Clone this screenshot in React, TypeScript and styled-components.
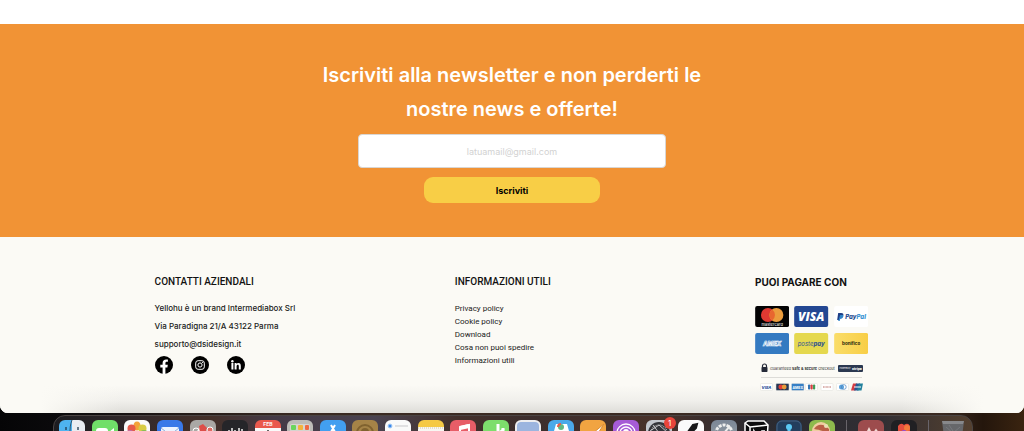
import React from "react";
import styled, { createGlobalStyle } from "styled-components";

const Global = createGlobalStyle`
  * { box-sizing: border-box; }
  body { margin: 0; background: #0b0a0c; font-family: Inter, "Liberation Sans", sans-serif; }
  h2, h3, p, ul { margin: 0; padding: 0; }
`;

const Desktop = styled.div`
  min-height: 100vh;
  display: flex;
  flex-direction: column;
  overflow: hidden;
  background: linear-gradient(90deg, #050506 0%, #0b0a0c 6%, #3a2a22 30%, #3a2a22 92%, #24160c 96%, #3a2410 100%);
`;

const Page = styled.div`
  flex: 1;
  display: flex;
  flex-direction: column;
  overflow: hidden;
  border-radius: 0 0 8px 8px;
  background: #fff;
  padding-top: 24px;
`;

const Newsletter = styled.section`
  background: #f19335;
  padding: 34px 16px;
  display: flex;
  flex-direction: column;
  align-items: center;
`;

const Title = styled.h2`
  max-width: 400px;
  color: #fff;
  font-size: 20px;
  line-height: 34px;
  font-weight: 600;
  text-align: center;
`;

const Form = styled.form`
  width: 31%;
  min-width: 240px;
  margin-top: 8px;
  display: flex;
  flex-direction: column;
  align-items: center;
  gap: 9px;
`;

const Email = styled.input`
  width: 100%;
  height: 34px;
  border: 1px solid #d9d6d3;
  border-radius: 4px;
  background: #fff;
  text-align: center;
  font: 400 9px Inter, sans-serif;
  &::placeholder { color: #d2d2d2; opacity: 1; }
`;

const Submit = styled.button`
  width: 57%;
  height: 26px;
  border: 0;
  border-radius: 9px;
  background: #f8ce46;
  color: #000;
  font: 700 9px Inter, sans-serif;
`;

const Footer = styled.footer`
  flex: 1;
  display: grid;
  grid-template-columns: 42% 42% 1fr;
  padding: 37px 15.1% 16px;
  background:
    linear-gradient(90deg, #fbfaf5 4%, rgba(251, 250, 245, 0) 12%, rgba(251, 250, 245, 0) 88%, #fbfaf5 96%),
    linear-gradient(0deg, #deddd8 0, #f0efeb 12px, #fbfaf5 28px);
`;

const Heading = styled.h3<{ $bold?: boolean }>`
  color: #111;
  font-family: ${(p) => (p.$bold ? "Inter" : "Roboto")}, sans-serif;
  font-size: 10px;
  line-height: 16px;
  font-weight: ${(p) => (p.$bold ? 700 : 500)};
  margin-bottom: ${(p) => (p.$bold ? 16 : 9)}px;
  white-space: nowrap;
`;

const Contact = styled.p`
  color: #1a1a1a;
  font-size: 8px;
  line-height: 18px;
  font-weight: 500;
  white-space: nowrap;
`;

const Socials = styled.div`
  display: flex;
  gap: 18px;
  margin-top: 3px;
`;

const SocialLink = styled.a`
  display: block;
  height: 18px;
  svg { display: block; width: 18px; height: 18px; }
`;

const Links = styled.ul`
  list-style: none;
  padding-top: 3px;
`;

const LinkItem = styled.li`
  height: 13px;
  line-height: 13px;
  font-family: Roboto, sans-serif;
  font-size: 8px;
  a { display: block; color: #222; text-decoration: none; white-space: nowrap; }
`;

const Cards = styled.div`
  width: 113px;
  display: grid;
  grid-template-columns: repeat(3, 1fr);
  gap: 6px 5px;
  svg { display: block; width: 100%; height: 21px; }
`;

const Trust = styled.svg`
  display: block;
  width: 113px;
  height: 32px;
  margin-top: 8px;
`;

const DockStrip = styled.div`
  height: 18px;
  flex: none;
  overflow: hidden;
  padding: 2px 5% 0 5.2%;
`;

const Dock = styled.div`
  height: 40px;
  display: flex;
  align-items: flex-start;
  padding: 4px 6px 0 5px;
  border: 1px solid #4a4443;
  border-radius: 12px;
  background: linear-gradient(90deg, #1c1c20 0%, #33292a 9%, #443029 17%, #443a46 24%, #4a4350 35%, #43302b 44%, #3c2e2d 52%, #49322a 66%, #2b2a30 76%, #302e33 90%, #54402f 100%);
`;

const Apps = styled.div`
  flex: 1;
  display: flex;
  justify-content: space-between;
`;

const Tile = styled.div<{ $bg: string }>`
  position: relative;
  width: 26px;
  height: 26px;
  flex: none;
  border-radius: 6px;
  background: ${(p) => p.$bg};
  svg { display: block; width: 26px; height: 26px; }
`;

const Badge = styled.span`
  position: absolute;
  top: -3px;
  right: -4px;
  width: 12px;
  height: 12px;
  border-radius: 50%;
  background: #e8453a;
  color: #fff;
  font-size: 8px;
  line-height: 12px;
  text-align: center;
`;

const Separator = styled.div`
  width: 1px;
  height: 26px;
  margin: 0 11px;
  background: #68646a;
`;

const Extra = styled.div`
  display: flex;
  gap: 7px;
`;

type App = { bg: string; art: React.ReactNode; badge?: string };

const apps: App[] = [
  { bg: "linear-gradient(90deg,#4eb3f0 50%,#e9edf2 50%)", art: <><path d="M13 0c-2 5-2 9-2 13h4" fill="none" stroke="#31566f" strokeWidth="1" /><path d="M7 7v3M19 7v3" stroke="#203a50" strokeWidth="1.3" /></> },
  { bg: "#70df69", art: <><rect x="4" y="8" width="12" height="11" rx="3" fill="#fff" /><path d="M17 12l5-4v10l-5-4z" fill="#fff" /></> },
  { bg: "#fafafa", art: <><ellipse cx="13" cy="6" rx="3.5" ry="4.5" fill="#f3a33a" /><circle cx="7.5" cy="8.5" r="4" fill="#e65a4b" /><circle cx="18.5" cy="8.5" r="4" fill="#d8cc45" /><circle cx="6" cy="14" r="4" fill="#bf6fa8" /><circle cx="20" cy="14" r="4" fill="#82bc59" /></> },
  { bg: "#3978e8", art: <><rect x="4" y="7" width="18" height="13" rx="2" fill="#edf3ff" /><path d="M4 8l9 7 9-7" fill="none" stroke="#8eadd5" /></> },
  { bg: "#aaa8a5", art: <><path d="M3 18l7-12 3 1 7 12" fill="#f4f1ef" /><path d="M10 14l-1-8 4-2 4 4-2 7z" fill="#dd4e49" /><circle cx="6" cy="11" r="3" fill="none" stroke="#fff" /><circle cx="20" cy="10" r="3" fill="#df6b62" stroke="#fff" /></> },
  { bg: "#252529", art: <path d="M7 13V10M10 14V8M13 14V10M17 14V8M20 14V9" stroke="#f1f1f1" strokeWidth="1.5" /> },
  { bg: "linear-gradient(#ea594d 8px,#fafafa 8px)", art: <><text x="13" y="6" textAnchor="middle" fontSize="5" fontWeight="700" fill="#fff">FEB</text><path d="M13 10v8" stroke="#333" strokeWidth="1.5" /></> },
  { bg: "#bdbcb8", art: <><rect x="3" y="4" width="20" height="18" rx="2" fill="#d6d4cf" /><rect x="4" y="5" width="5" height="5" rx="1" fill="#69d65d" /><rect x="11" y="5" width="5" height="5" rx="1" fill="#f3b43e" /><rect x="18" y="5" width="4" height="5" rx="1" fill="#ee6a45" /></> },
  { bg: "#429ff0", art: <path d="M11 5l8 14M15 5L7 19M4 15h18" fill="none" stroke="#fff" strokeWidth="2" /> },
  { bg: "#a58347", art: <><circle cx="13" cy="13" r="8" fill="none" stroke="#80622f" strokeWidth="2" /><circle cx="13" cy="12" r="4" fill="#80622f" /></> },
  { bg: "#fafafa", art: <><circle cx="5" cy="6" r="2" fill="#3887ea" stroke="#aacdf5" /><path d="M10 6h13M10 13h13" stroke="#c7c7ca" /></> },
  { bg: "linear-gradient(#f5c944 7px,#f8f7f3 7px)", art: <path d="M0 8h26" stroke="#d2c9a8" strokeDasharray="1 1" /> },
  { bg: "#e75d67", art: <><path d="M10 18V7l9-2v11" fill="none" stroke="#fff" strokeWidth="2" /><path d="M10 8l9-2" stroke="#fff" strokeWidth="4" /></> },
  { bg: "#7dde6c", art: <><path d="M15 4v15M20 8v7" stroke="#fff" strokeWidth="3" /><path d="M15 13l6-4" stroke="#fff" strokeWidth="2" /></> },
  { bg: "#eeeef0", art: <rect x="2" y="2" width="22" height="22" rx="4" fill="#9cb5df" /> },
  { bg: "#4ba9e9", art: <><path d="M6 11l2-7h11l2 7v9H6z" fill="#fff" /><circle cx="13" cy="7" r="3" fill="#63b982" /><path d="M10 7a3 3 0 0 1 3-3" fill="none" stroke="#e85d4a" strokeWidth="2" /></> },
  { bg: "#f1a441", art: <path d="M7 18L24 4l-9 14z" fill="#fff" stroke="#da8c34" /> },
  { bg: "#a65bd6", art: <><g fill="none" stroke="#fff" strokeWidth="1.3"><circle cx="13" cy="13" r="9" /><circle cx="13" cy="13" r="6" /></g><circle cx="13" cy="12" r="3" fill="#fff" /></> },
  { bg: "#c3c7ce", badge: "1", art: <><circle cx="13" cy="13" r="11" fill="#33343a" /><circle cx="13" cy="13" r="8" fill="none" stroke="#aaa" strokeWidth="1.5" strokeDasharray="1 1" /><path d="M4 11l9-6 9 8M7 5l6 8" fill="none" stroke="#c4c4c8" strokeWidth="1" /></> },
  { bg: "#fafafa", art: <path d="M7 16L15 5l4-1-1 4-10 10z" fill="#171719" stroke="#171719" strokeWidth="2" /> },
  { bg: "linear-gradient(#7b8696,#9ba4a8)", art: <><circle cx="13" cy="13" r="8" fill="none" stroke="#eee" strokeWidth="3" strokeDasharray="3 1" /><path d="M13 13l6-7" stroke="#eee" strokeWidth="2" /></> },
  { bg: "transparent", art: <><path d="M2 3l3-2h16l4 4-1 15-17 1-5-5z" fill="#0b0b0d" stroke="#fff" strokeWidth="1.5" /><path d="M2 3l5 4 18-2M7 7v15" fill="none" stroke="#fff" strokeWidth="1.5" /><path d="M11 17v-6l4 6v-6M19 16v-5h3" fill="none" stroke="#fff" strokeWidth="1.6" /></> },
  { bg: "#233e5d", art: <><rect x="1" y="1" width="24" height="24" rx="5" fill="none" stroke="#466180" /><circle cx="13" cy="7" r="3" fill="#5bc9f4" /><path d="M13 8v8" stroke="#5bc9f4" strokeWidth="3" /></> },
  { bg: "#8dba4c", art: <><circle cx="12" cy="11" r="9" fill="#efcda0" /><path d="M5 9c4-6 10-5 15 0v5c-5-3-9-4-15-5" fill="#b95f45" /><circle cx="17" cy="6" r="2" fill="#e9dfb3" /></> },
];

function AppTile({ app }: { app: App }) {
  return (
    <Tile $bg={app.bg}>
      <svg viewBox="0 0 26 26" aria-hidden="true">{app.art}</svg>
      {app.badge && <Badge>{app.badge}</Badge>}
    </Tile>
  );
}

const links = ["Privacy policy", "Cookie policy", "Download", "Cosa non puoi spedire", "Informazioni utili"];

function PaymentCards() {
  const box = { viewBox: "0 0 34 21", role: "img" };
  return (
    <Cards>
      <svg {...box} aria-label="Mastercard">
        <rect width="34" height="21" rx="2" fill="#030304" />
        <circle cx="12.8" cy="9" r="7" fill="#df3932" />
        <circle cx="21.2" cy="9" r="7" fill="#eb9c3c" />
        <path d="M17 3.4a7 7 0 0 1 0 11.2a7 7 0 0 1 0-11.2" fill="#e8662f" />
        <text x="17" y="19.5" textAnchor="middle" fontSize="4" fill="#fff">mastercard</text>
      </svg>
      <svg {...box} aria-label="Visa">
        <rect width="34" height="21" rx="2" fill="#234792" />
        <text x="17" y="15" textAnchor="middle" fontSize="12" fontWeight="800" fontStyle="italic" fontFamily="Open Sans" fill="#fff">VISA</text>
      </svg>
      <svg {...box} aria-label="PayPal">
        <rect width="34" height="21" rx="2" fill="#fff" />
        <path d="M4 7h3q3 0 2 3-1 2-3 2l-.6 2H3z" fill="#203f86" />
        <path d="M6 9h3q1 3-3 4l-.5 2H4z" fill="#3184c9" />
        <text x="11" y="13" fontSize="6" fontWeight="800" fontStyle="italic" fill="#24498d">Pay<tspan fill="#328fd0">Pal</tspan></text>
      </svg>
      <svg {...box} aria-label="American Express">
        <rect width="34" height="21" rx="2" fill="#347ac1" />
        <text x="17" y="13" textAnchor="middle" fontSize="6" fontWeight="800" fontStyle="italic" fill="#347ac1" stroke="#fff" strokeWidth=".6">AMEX</text>
      </svg>
      <svg {...box} aria-label="Postepay">
        <rect width="34" height="21" rx="2" fill="#e5d84e" />
        <text x="17" y="13" textAnchor="middle" fontSize="6" fontStyle="italic" fill="#385a8e">poste<tspan fontWeight="800">pay</tspan></text>
      </svg>
      <svg {...box} aria-label="Bonifico">
        <defs><linearGradient id="gold" x1="0" x2="1"><stop stopColor="#fadd69" /><stop offset="1" stopColor="#f8ce46" /></linearGradient></defs>
        <rect width="34" height="21" rx="2" fill="url(#gold)" />
        <text x="17" y="12" textAnchor="middle" fontSize="4.5" fontWeight="700" fill="#241d0a">bonifico</text>
      </svg>
    </Cards>
  );
}

function TrustBadge() {
  return (
    <Trust viewBox="0 0 113 32" role="img" aria-label="Guaranteed safe and secure checkout, powered by Stripe">
      <path d="M7.5 5V4a2 2 0 0 1 4 0v1" fill="none" stroke="#252a38" strokeWidth="1.2" />
      <rect x="6.5" y="5" width="6" height="5" rx=".7" fill="#252a38" />
      <text x="15" y="8" fontSize="3.8" fill="#333">Guaranteed <tspan fontWeight="700">safe &amp; secure</tspan> checkout</text>
      <rect x="83" y="3" width="25" height="7" rx="1" fill="#2b3850" />
      <text x="84.5" y="7.4" fontSize="2" fill="#fff">Powered by</text>
      <text x="97" y="8" fontSize="3.4" fontWeight="800" fill="#fff">stripe</text>
      <path d="M6 15.5h101" stroke="#dddcd8" />
      <g stroke="#deded9" strokeWidth=".5">
        {[5.5, 50.5, 66, 81.5].map((x) => <rect key={x} x={x} y="21.5" width="12" height="7" rx="1" fill="#fff" />)}
        <rect x="21" y="21.5" width="13" height="7" rx="1" fill="#253857" />
        <rect x="36.5" y="21.5" width="12.5" height="7" rx="1" fill="#367fc5" />
      </g>
      <text x="11.5" y="26.5" textAnchor="middle" fontSize="4" fontStyle="italic" fontWeight="800" fill="#28519a">VISA</text>
      <circle cx="25.8" cy="25" r="2.4" fill="#df3d36" /><circle cx="29.2" cy="25" r="2.4" fill="#e89a3a" />
      <text x="42.8" y="26.5" textAnchor="middle" fontSize="3.5" fontWeight="700" fill="#fff">AMEX</text>
      <rect x="53" y="22.5" width="2.2" height="5" rx=".8" fill="#3375b3" /><rect x="55.5" y="22.5" width="2.2" height="5" rx=".8" fill="#d84041" /><rect x="58" y="22.5" width="2.2" height="5" rx=".8" fill="#419c58" />
      <path d="M68 25h8" stroke="#b96b63" strokeWidth="1" strokeDasharray="1 .4" />
      <circle cx="86.5" cy="25" r="2.5" fill="#5ba1da" /><circle cx="88.8" cy="25" r="2.4" fill="none" stroke="#4782bd" strokeWidth=".7" />
      <path d="M98 21.5h4l-1.5 7H96z" fill="#d53d44" /><path d="M101 21.5h4l-1.5 7H99z" fill="#285894" /><path d="M104 21.5h4l-1.5 7H102z" fill="#23819d" />
      <path d="M99 25h7" stroke="#fff" strokeWidth="1" />
    </Trust>
  );
}

export default function App() {
  return (
    <Desktop>
      <Global />
      <Page>
        <Newsletter>
          <Title>Iscriviti alla newsletter e non perderti le nostre news e offerte!</Title>
          <Form onSubmit={(e) => e.preventDefault()}>
            <Email type="email" aria-label="Email" placeholder="latuamail@gmail.com" />
            <Submit type="submit">Iscriviti</Submit>
          </Form>
        </Newsletter>
        <Footer>
          <section>
            <Heading>CONTATTI AZIENDALI</Heading>
            <Contact>Yellohu è un brand Intermediabox Srl</Contact>
            <Contact>Via Paradigna 21/A 43122 Parma</Contact>
            <Contact>supporto@dsidesign.it</Contact>
            <Socials>
              <SocialLink href="#facebook" aria-label="Facebook">
                <svg viewBox="0 0 18 18"><circle cx="9" cy="9" r="9" fill="#000" /><path d="M7.6 18v-6.5H5.3V8.8h2.3V7c0-2.4 1.4-3.6 3.5-3.6l1.8.2v2.2h-1.1c-1.1 0-1.4.7-1.4 1.4v1.6h2.4l-.4 2.7h-2V18z" fill="#fff" /></svg>
              </SocialLink>
              <SocialLink href="#instagram" aria-label="Instagram">
                <svg viewBox="0 0 18 18"><circle cx="9" cy="9" r="9" fill="#000" /><g fill="none" stroke="#fff" strokeWidth="1"><rect x="4.7" y="4.7" width="8.6" height="8.6" rx="2.4" /><circle cx="9" cy="9" r="2.1" /></g><circle cx="11.5" cy="6.5" r=".6" fill="#fff" /></svg>
              </SocialLink>
              <SocialLink href="#linkedin" aria-label="LinkedIn">
                <svg viewBox="0 0 18 18"><circle cx="9" cy="9" r="9" fill="#000" /><circle cx="5.4" cy="5.2" r="1.2" fill="#fff" /><path d="M4.4 7.1h2v6.3h-2zM7.6 7.1h1.9v.9c.4-.7 1.1-1 1.9-1 1.8 0 2.4 1.1 2.4 2.9v3.5h-2v-3.1c0-1-.2-1.6-1-1.6s-1.2.6-1.2 1.6v3.1h-2z" fill="#fff" /></svg>
              </SocialLink>
            </Socials>
          </section>
          <section>
            <Heading>INFORMAZIONI UTILI</Heading>
            <Links>
              {links.map((text) => <LinkItem key={text}><a href="#info">{text}</a></LinkItem>)}
            </Links>
          </section>
          <section>
            <Heading $bold>PUOI PAGARE CON</Heading>
            <PaymentCards />
            <TrustBadge />
          </section>
        </Footer>
      </Page>
      <DockStrip>
        <Dock>
          <Apps>{apps.map((app, i) => <AppTile key={i} app={app} />)}</Apps>
          <Separator />
          <Extra>
            <AppTile app={{ bg: "#9d4c4d", art: <path d="M8 15l3-6 3 6M16 13l2-3 2 3" fill="none" stroke="#f1d9d4" strokeWidth="1.8" /> }} />
            <AppTile app={{ bg: "#202023", art: <><path d="M7 6q3-4 6-1 4-3 6 1v5l-6 6-6-6z" fill="#e44f3f" /><circle cx="16" cy="8" r="3" fill="#f17a3c" /><circle cx="13" cy="13" r="3" fill="#9b4ed0" /></> }} />
          </Extra>
          <Separator />
          <AppTile app={{ bg: "transparent", art: <><path d="M2 1h22l-3 24H5z" fill="#66676a" /><path d="M2 1h22l-1 3H3z" fill="#87888b" /><path d="M6 7l7 6 7-6M9 5l8 12" fill="none" stroke="#78797d" /></> }} />
        </Dock>
      </DockStrip>
    </Desktop>
  );
}
